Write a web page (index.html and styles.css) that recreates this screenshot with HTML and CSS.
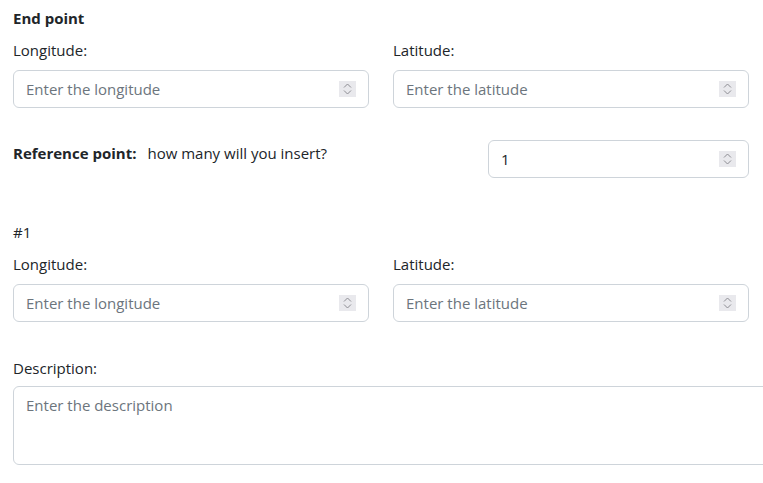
FILE: index.html
```html
<!DOCTYPE html>
<html>
<head>
<meta charset="utf-8">
<link rel="stylesheet" href="styles.css">
</head>
<body>
<div class="page">
  <h3 class="section-title">End point</h3>
  <div class="row">
    <div class="col">
      <label class="label">Longitude:</label>
      <div class="field">
        <input class="input" type="text" placeholder="Enter the longitude">
        <span class="spin"><svg width="17" height="16" viewBox="0 0 17 16"><path d="M5 6.5 L8.5 3 L12 6.5 M5 9.5 L8.5 13 L12 9.5" fill="none" stroke="#8d8d93" stroke-width="1"/></svg></span>
      </div>
    </div>
    <div class="col">
      <label class="label">Latitude:</label>
      <div class="field">
        <input class="input" type="text" placeholder="Enter the latitude">
        <span class="spin"><svg width="17" height="16" viewBox="0 0 17 16"><path d="M5 6.5 L8.5 3 L12 6.5 M5 9.5 L8.5 13 L12 9.5" fill="none" stroke="#8d8d93" stroke-width="1"/></svg></span>
      </div>
    </div>
  </div>

  <div class="ref-row">
    <div class="ref-text"><strong>Reference point:</strong><span class="ref-q">how many will you insert?</span></div>
    <div class="field field-small">
      <input class="input value" type="text" value="1">
      <span class="spin"><svg width="17" height="16" viewBox="0 0 17 16"><path d="M5 6.5 L8.5 3 L12 6.5 M5 9.5 L8.5 13 L12 9.5" fill="none" stroke="#8d8d93" stroke-width="1"/></svg></span>
    </div>
  </div>

  <div class="num">#1</div>
  <div class="row">
    <div class="col">
      <label class="label">Longitude:</label>
      <div class="field">
        <input class="input" type="text" placeholder="Enter the longitude">
        <span class="spin"><svg width="17" height="16" viewBox="0 0 17 16"><path d="M5 6.5 L8.5 3 L12 6.5 M5 9.5 L8.5 13 L12 9.5" fill="none" stroke="#8d8d93" stroke-width="1"/></svg></span>
      </div>
    </div>
    <div class="col">
      <label class="label">Latitude:</label>
      <div class="field">
        <input class="input" type="text" placeholder="Enter the latitude">
        <span class="spin"><svg width="17" height="16" viewBox="0 0 17 16"><path d="M5 6.5 L8.5 3 L12 6.5 M5 9.5 L8.5 13 L12 9.5" fill="none" stroke="#8d8d93" stroke-width="1"/></svg></span>
      </div>
    </div>
  </div>

  <label class="label desc-label">Description:</label>
  <textarea class="textarea" placeholder="Enter the description"></textarea>
</div>
</body>
</html>
```
FILE: styles.css
```css
html, body {
  margin: 0;
  padding: 0;
  background: #fff;
  overflow: hidden;
}
body {
  font-family: "Open Sans", "Noto Sans", sans-serif;
  font-size: 15px;
  color: #212529;
}
.page {
  width: 736px;
  padding: 8px 0 0 13px;
}
.section-title {
  margin: 0;
  font-size: 15px;
  font-weight: 700;
  line-height: 20px;
}
.row {
  display: flex;
  gap: 24px;
}
.col {
  flex: 1;
  display: flex;
  flex-direction: column;
}
.label {
  display: block;
  line-height: 20px;
  margin: 12px 0 10px;
}
.field {
  display: flex;
  align-items: center;
  height: 38px;
  box-sizing: border-box;
  border: 1px solid #ced4da;
  border-radius: 6px;
  padding: 0 12px 0 12px;
  background: #fff;
}
.input {
  flex: 1;
  min-width: 0;
  border: none;
  outline: none;
  padding: 0;
  font: inherit;
  color: #212529;
  background: transparent;
}
.input::placeholder {
  color: #6c757d;
}
.spin {
  display: block;
  width: 17px;
  height: 16px;
  background: #e9e9ed;
}
.spin svg {
  display: block;
}
.ref-row {
  display: flex;
  justify-content: space-between;
  align-items: flex-start;
  margin-top: 32px;
}
.ref-text {
  padding-top: 3px;
  line-height: 20px;
}
.ref-q {
  margin-left: 11px;
}
.field-small {
  width: 261px;
}
.value {
  color: #212529;
}
.num {
  margin-top: 44px;
  line-height: 20px;
}
.desc-label {
  margin: 36px 0 8px;
}
.textarea {
  display: block;
  box-sizing: border-box;
  width: 770px;
  height: 79px;
  border: 1px solid #ced4da;
  border-radius: 6px;
  padding: 8px 12px;
  font: inherit;
  color: #212529;
  resize: none;
  outline: none;
}
.textarea::placeholder {
  color: #6c757d;
}
```
